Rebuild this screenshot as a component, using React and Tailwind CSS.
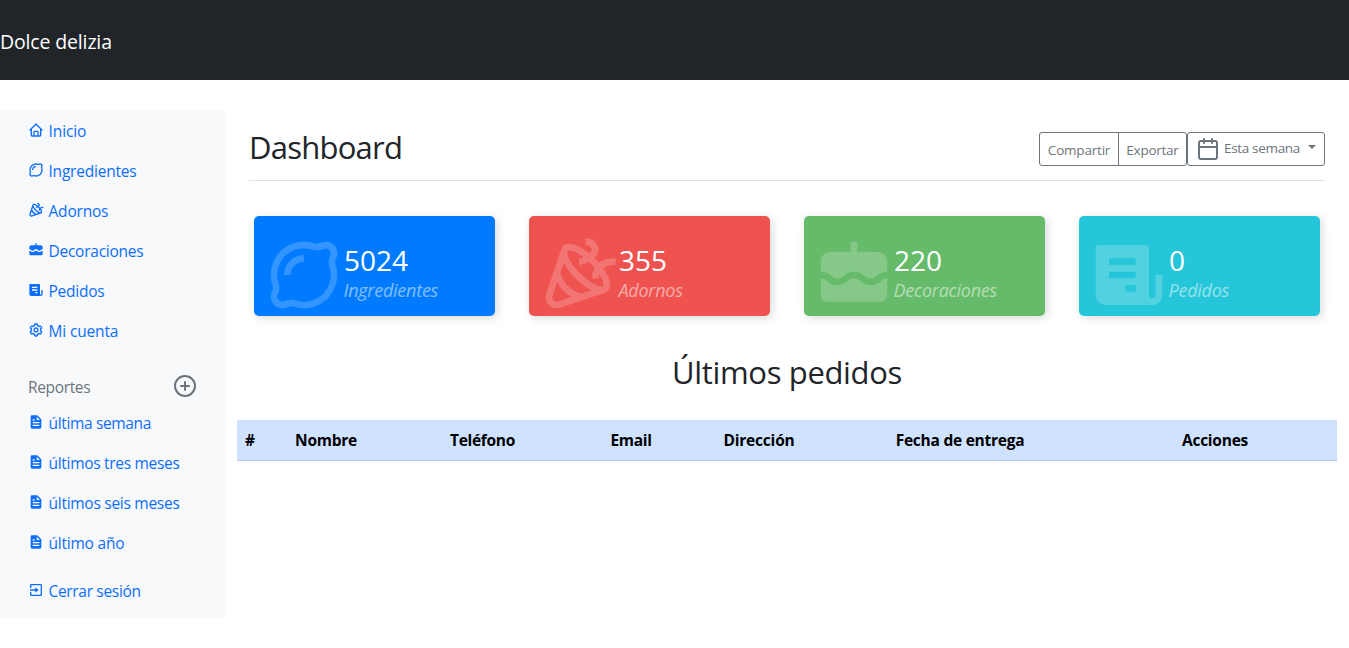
import {
  BiHome, BiLemon, BiParty, BiSolidCake, BiSolidReceipt, BiCog, BiSolidFile, BiExit,
} from "react-icons/bi";

const mainLinks = [
  { Icon: BiHome, label: "Inicio", tracking: "tracking-[-0.1px]" },
  { Icon: BiLemon, label: "Ingredientes", tracking: "tracking-[-0.22px]" },
  { Icon: BiParty, label: "Adornos", tracking: "tracking-[-0.2px]" },
  { Icon: BiSolidCake, label: "Decoraciones", tracking: "tracking-[-0.25px]" },
  { Icon: BiSolidReceipt, label: "Pedidos", tracking: "tracking-[-0.25px]" },
  { Icon: BiCog, label: "Mi cuenta", tracking: "tracking-[-0.15px]" },
];

const reportLinks = [
  { Icon: BiSolidFile, label: "última semana", tracking: "tracking-[-0.35px]" },
  { Icon: BiSolidFile, label: "últimos tres meses", tracking: "tracking-[-0.3px]" },
  { Icon: BiSolidFile, label: "últimos seis meses", tracking: "tracking-[-0.27px]" },
  { Icon: BiSolidFile, label: "último año", tracking: "tracking-[-0.22px]" },
];

const cards = [
  { Icon: BiLemon, value: "5024", label: "Ingredientes", bg: "bg-[#007bff]" },
  { Icon: BiParty, value: "355", label: "Adornos", bg: "bg-[#ef5350]" },
  { Icon: BiSolidCake, value: "220", label: "Decoraciones", bg: "bg-[#66bb6a]" },
  { Icon: BiSolidReceipt, value: "0", label: "Pedidos", bg: "bg-[#26c6da]" },
];

const columns = [
  { label: "#", width: "w-[21px] pl-2 text-left" },
  { label: "Nombre", width: "w-[136px] text-center tracking-[-0.25px]" },
  { label: "Teléfono", width: "w-[177px] text-center tracking-[-0.3px]" },
  { label: "Email", width: "w-[120px] text-center tracking-[-0.3px]" },
  { label: "Dirección", width: "w-[136px] text-center tracking-[-0.2px]" },
  { label: "Fecha de entrega", width: "w-[266px] text-center tracking-[-0.25px]" },
  { label: "Acciones", width: "w-[244px] text-center tracking-[-0.25px]" },
];

function NavLink({ Icon, label, tracking }) {
  return (
    <a href="#" className="flex h-10 items-center gap-[4.5px] px-7 text-[15.5px] leading-6 text-[#0d6efd]">
      <Icon className="-mt-[2px] size-4 shrink-0" />
      <span className={"pb-px " + tracking}>{label}</span>
    </a>
  );
}

function StatCard({ Icon, value, label, bg }) {
  return (
    <div className={"flex h-[100px] w-[241px] rounded-[5px] px-[10px] pt-[19px] text-white shadow-[2px_2px_10px_#dadada] " + bg}>
      <Icon className="-ml-[0.5px] size-20 shrink-0 opacity-20" />
      <div className="pt-[7px] pl-[0.5px]">
        <div className="text-[28px] leading-[36px]">{value}</div>
        <div className="-ml-[0.5px] pt-px text-[18px] leading-[22px] tracking-[-0.25px] italic opacity-50">{label}</div>
      </div>
    </div>
  );
}

function PlusCircle() {
  return (
    <svg viewBox="0 0 24 24" className="size-6" fill="none" stroke="currentColor" strokeWidth="2" strokeLinecap="round">
      <circle cx="12" cy="12" r="10" />
      <path d="M12 8v8M8 12h8" />
    </svg>
  );
}

function Calendar() {
  return (
    <svg viewBox="0 0 24 24" className="size-6" fill="none" stroke="currentColor" strokeWidth="2" strokeLinecap="round" strokeLinejoin="round">
      <rect x="3" y="4" width="18" height="18" rx="2" />
      <path d="M16 2v4M8 2v4M3 10h18" />
    </svg>
  );
}

export default function App() {
  return (
    <div className="min-h-[648px] bg-white font-['Open_Sans','Noto_Sans',sans-serif] text-[#212529]">
      <header className="flex h-20 items-center bg-[#212529] pt-1">
        <a href="#" className="text-[19.5px] leading-7 tracking-[-0.15px] text-white">Dolce delizia</a>
      </header>
      <div className="flex pt-[30px]">
        <nav className="h-[508px] w-[225px] shrink-0 bg-[#f8f9fa] pt-px">
          {mainLinks.map((l) => <NavLink key={l.label} {...l} />)}
          <div className="mt-[21px] mb-[3px] flex h-7 items-center justify-between px-7 text-[15.5px] leading-6 text-[#6c757d]">
            <span className="pt-px tracking-[-0.35px]">Reportes</span>
            <PlusCircle />
          </div>
          {reportLinks.map((l) => <NavLink key={l.label} {...l} />)}
          <div className="pt-2">
            <NavLink Icon={BiExit} label="Cerrar sesión" tracking="tracking-[-0.32px]" />
          </div>
        </nav>
        <main className="flex-1 px-3">
          <div className="mx-3 flex h-[71px] justify-between border-b border-[#dee2e6] pt-[14px]">
            <h1 className="pt-1 text-[31px] leading-[38px] tracking-[-0.75px]">Dashboard</h1>
            <div className="mt-2 flex h-[34px] text-[13.5px] text-[#6c757d]">
              <button className="flex w-20 items-center justify-center rounded-l-[3px] border border-[#6c757d] pt-[3px] tracking-[-0.2px]">Compartir</button>
              <button className="-ml-px flex w-[69px] items-center justify-center rounded-r-[3px] border border-[#6c757d] pt-[3px] tracking-[-0.25px]">Exportar</button>
              <button className="flex w-[138px] items-center rounded-[3px] border border-[#6c757d] pl-2">
                <Calendar />
                <span className="ml-1 pb-px tracking-[-0.33px]">Esta semana</span>
                <span className="mb-1 ml-2 border-x-4 border-t-4 border-x-transparent border-t-[#6c757d]" />
              </button>
            </div>
          </div>
          <div className="mt-[35px] flex justify-between px-[17px]">
            {cards.map((c) => <StatCard key={c.label} {...c} />)}
          </div>
          <h2 className="mt-[37px] text-center text-[31px] leading-[38px] tracking-[-0.35px]">Últimos pedidos</h2>
          <table className="mt-[29px] w-[1100px] table-fixed border-separate border-spacing-0">
            <thead>
              <tr className="bg-[#cfe2ff] text-[15.5px] font-bold text-black">
                {columns.map((c) => <th key={c.label} className={"h-[41px] border-b border-[#bacbe6] pt-[2px] pb-0 " + c.width}>{c.label}</th>)}
              </tr>
            </thead>
          </table>
        </main>
      </div>
    </div>
  );
}
